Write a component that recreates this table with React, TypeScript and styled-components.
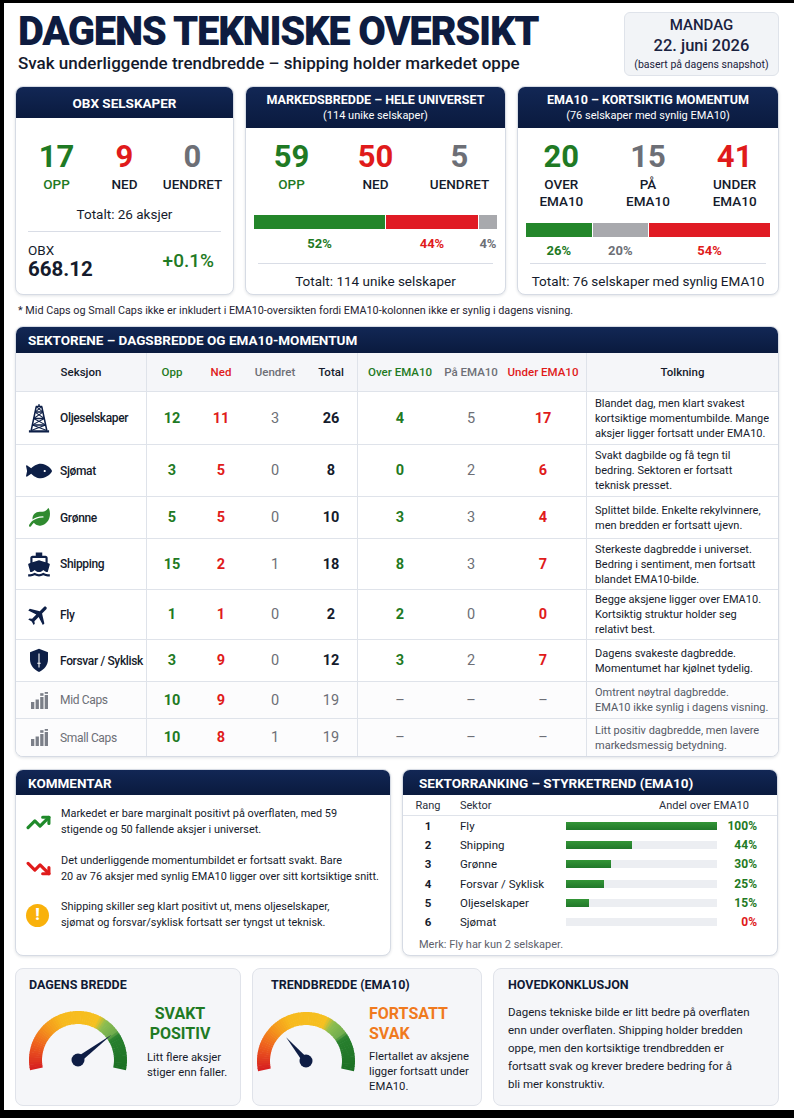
import React from 'react';
import styled, { createGlobalStyle } from 'styled-components';
import { FaFish, FaLeaf } from 'react-icons/fa';
import { MdDirectionsBoat, MdFlight } from 'react-icons/md';
import { TrendingUp, TrendingDown } from 'lucide-react';

const NAVY = '#0d1f47';
const INK = '#151b2c';
const GREEN = '#1f7a24';
const RED = '#e01b1b';
const GREY = '#6d6f76';
const LINE = '#dfe3ea';
const HEAD_BG = 'linear-gradient(180deg, #122755 0%, #0a1a3e 100%)';

const GlobalStyle = createGlobalStyle`
	html, body {
		margin: 0;
		padding: 0;
		background: #000;
	}
	body {
		font-family: Roboto, 'Liberation Sans', Arial, sans-serif;
		color: ${INK};
	}
	* {
		box-sizing: border-box;
	}
`;

const Sheet = styled.main`
	width: 790px;
	height: 1107px;
	margin: 3px 0 0 4px;
	padding: 0 15px 0 11px;
	background: #fff;
`;

/* ---------- header ---------- */

const Header = styled.header`
	height: 83px;
	display: flex;
	justify-content: space-between;
	align-items: flex-start;
`;

const TitleBlock = styled.div`
	padding: 7px 0 0 3px;
`;

const Title = styled.h1`
	margin: 0;
	font-size: 40px;
	line-height: 44px;
	font-weight: 900;
	letter-spacing: -1.25px;
	color: #0e1c40;
`;

const Subtitle = styled.p`
	margin: -1px 0 0;
	font-size: 17px;
	line-height: 20px;
	font-weight: 500;
	color: #141a2c;
`;

const DateBox = styled.div`
	margin-top: 9px;
	width: 155px;
	height: 64px;
	background: #f2f4f7;
	border: 1px solid #dfe3ea;
	border-radius: 6px;
	display: flex;
	flex-direction: column;
	align-items: center;
	justify-content: center;
	color: #1a2240;
`;

const DateDay = styled.div`
	font-size: 15px;
	line-height: 19px;
	font-weight: 500;
`;

const DateFull = styled.div`
	font-size: 16.5px;
	line-height: 21px;
	font-weight: 500;
`;

const DateNote = styled.div`
	margin-top: 1px;
	font-size: 10.5px;
	line-height: 15px;
`;

/* ---------- top cards ---------- */

const TopRow = styled.section`
	display: grid;
	grid-template-columns: 219px 261px 262px;
	gap: 11px;
	height: 209px;
`;

const Card = styled.div`
	background: #fff;
	border: 1px solid #d6dbe4;
	border-radius: 8px;
	overflow: hidden;
	box-shadow: 0 1px 3px rgba(20, 30, 60, 0.12);
	display: flex;
	flex-direction: column;
`;

const CardHead = styled.div<{ $h: number; $size?: number }>`
	height: ${p => p.$h}px;
	flex-shrink: 0;
	background: ${HEAD_BG};
	color: #fff;
	display: flex;
	flex-direction: column;
	justify-content: center;
	align-items: center;
	font-size: ${p => p.$size ?? 12.5}px;
	line-height: 16px;
	font-weight: 700;
`;

const HeadSub = styled.span`
	font-size: 11px;
	line-height: 15px;
	font-weight: 400;
`;

const CardBody = styled.div<{ $pt: number }>`
	flex: 1;
	padding-top: ${p => p.$pt}px;
	display: flex;
	flex-direction: column;
`;

const StatRow = styled.div<{ $px: number }>`
	display: grid;
	grid-template-columns: repeat(3, 1fr);
	padding: 0 ${p => p.$px}px;
`;

const Stat = styled.div`
	display: flex;
	flex-direction: column;
	align-items: center;
	text-align: center;
`;

const StatNum = styled.div<{ $c: string }>`
	font-size: 31px;
	line-height: 32px;
	font-weight: 700;
	color: ${p => p.$c};
`;

const StatLabel = styled.div<{ $c: string }>`
	margin-top: 3px;
	font-size: 13.5px;
	line-height: 16.5px;
	font-weight: 500;
	color: ${p => p.$c};
`;

const TotalLine = styled.div<{ $mt: number }>`
	margin-top: ${p => p.$mt}px;
	text-align: center;
	font-size: 13.5px;
	line-height: 18px;
	color: ${INK};
`;

const Divider = styled.div<{ $mt: number; $mx: number }>`
	height: 1px;
	margin: ${p => p.$mt}px ${p => p.$mx}px 0;
	background: #d9dde6;
`;

const ObxRow = styled.div`
	margin-top: 10px;
	padding: 0 19px 0 12px;
	display: flex;
	justify-content: space-between;
	align-items: center;
`;

const ObxLabel = styled.div`
	font-size: 13.5px;
	line-height: 16px;
`;

const ObxValue = styled.div`
	font-size: 20.5px;
	line-height: 22px;
	font-weight: 700;
`;

const ObxChange = styled.div`
	font-size: 19px;
	line-height: 22px;
	font-weight: 500;
	color: ${GREEN};
`;

const Bar = styled.div<{ $mt: number }>`
	margin: ${p => p.$mt}px 8px 0;
	height: 14px;
	display: flex;
	gap: 1px;
`;

const Seg = styled.div<{ $c: string; $w: number }>`
	flex: ${p => p.$w} 0 0;
	background: ${p => p.$c};
`;

const PctRow = styled.div<{ $mt: number }>`
	margin: ${p => p.$mt}px 8px 0;
	display: flex;
	gap: 1px;
`;

const Pct = styled.div<{ $c: string; $w: number }>`
	flex: ${p => p.$w} 0 0;
	min-width: 0;
	white-space: nowrap;
	text-align: center;
	font-size: 13px;
	line-height: 14px;
	font-weight: 700;
	color: ${p => p.$c};
`;

const Footnote = styled.p`
	margin: 0;
	height: 31px;
	padding-left: 3px;
	display: flex;
	align-items: center;
	font-size: 10.8px;
	color: #1f2433;
`;

/* ---------- sector table ---------- */

const SectionHead = styled.div<{ $pl: number; $h?: number }>`
	height: ${p => p.$h ?? 26}px;
	flex-shrink: 0;
	background: ${HEAD_BG};
	color: #fff;
	display: flex;
	align-items: center;
	padding-left: ${p => p.$pl}px;
	font-size: 13.5px;
	font-weight: 700;
`;

const TRow = styled.div<{ $h: number; $head?: boolean; $muted?: boolean }>`
	display: grid;
	grid-template-columns: 131px 50px 48px 60px 53px 84px 58px 87px 1fr;
	height: ${p => p.$h}px;
	border-bottom: 1px solid ${LINE};
	background: ${p => (p.$head ? '#f5f6f9' : p.$muted ? '#fcfcfd' : '#fff')};
	&:last-child {
		border-bottom: none;
	}
`;

const TCell = styled.div<{ $c?: string; $bold?: boolean; $div?: boolean; $size?: number }>`
	display: flex;
	align-items: center;
	justify-content: center;
	font-size: ${p => p.$size ?? 14.5}px;
	font-weight: ${p => (p.$bold ? 700 : 400)};
	color: ${p => p.$c ?? INK};
	border-right: ${p => (p.$div ? `1px solid ${LINE}` : 'none')};
`;

const HeadCell = styled(TCell)`
	font-size: 11.5px;
	font-weight: 500;
`;

const NameCell = styled.div<{ $muted?: boolean }>`
	display: flex;
	align-items: center;
	gap: 8px;
	padding-left: 10px;
	border-right: 1px solid ${LINE};
	font-size: 12px;
	letter-spacing: -0.35px;
	font-weight: ${p => (p.$muted ? 400 : 500)};
	color: ${p => (p.$muted ? GREY : INK)};
	white-space: nowrap;
	overflow: hidden;
`;

const IconBox = styled.span`
	width: 26px;
	display: flex;
	justify-content: center;
	align-items: center;
	flex-shrink: 0;
`;

const NoteCell = styled.div<{ $muted?: boolean }>`
	display: flex;
	align-items: center;
	padding: 0 4px 0 8px;
	font-size: 11px;
	line-height: 15px;
	color: ${p => (p.$muted ? '#555a66' : INK)};
`;

/* ---------- lower row ---------- */

const LowerRow = styled.section`
	margin-top: 12px;
	display: grid;
	grid-template-columns: 376px 376px;
	gap: 11px;
	height: 187px;
`;

const CommentList = styled.ul`
	margin: 0;
	padding: 11px 10px 0 10px;
	list-style: none;
	display: flex;
	flex-direction: column;
	gap: 14.5px;
`;

const CommentItem = styled.li`
	display: grid;
	grid-template-columns: 35px 1fr;
	align-items: center;
	font-size: 10.9px;
	line-height: 16px;
	color: ${INK};
	white-space: nowrap;
`;

const WarnDot = styled.span`
	width: 23px;
	height: 23px;
	border-radius: 50%;
	background: #f9b10b;
	color: #fff;
	font-weight: 900;
	font-size: 16px;
	display: flex;
	align-items: center;
	justify-content: center;
`;

const RankGrid = styled.div<{ $head?: boolean }>`
	display: grid;
	grid-template-columns: 28px 124px 151px 40px;
	align-items: center;
	padding-left: 11px;
	height: ${p => (p.$head ? 21 : 19.2)}px;
	border-bottom: ${p => (p.$head ? `1px solid ${LINE}` : 'none')};
	margin-bottom: ${p => (p.$head ? 0.5 : 0)}px;
	font-size: ${p => (p.$head ? 11 : 11.5)}px;
	color: ${p => (p.$head ? '#2a2f3d' : INK)};
`;

const RankNum = styled.span<{ $plain?: boolean }>`
	text-align: center;
	font-weight: ${p => (p.$plain ? 400 : 700)};
`;

const RankName = styled.span`
	padding-left: 18px;
	white-space: nowrap;
`;

const RankHeadRight = styled.span`
	grid-column: 3 / 5;
	text-align: right;
	padding-right: 8px;
`;

const Track = styled.div`
	height: 8px;
	background: #eceef2;
`;

const Fill = styled.div`
	height: 100%;
	background: linear-gradient(180deg, #339537, #21782a);
`;

const RankPct = styled.span<{ $c: string }>`
	text-align: right;
	font-weight: 700;
	font-size: 12px;
	color: ${p => p.$c};
`;

const RankNote = styled.div`
	margin-top: 5px;
	padding-left: 16px;
	font-size: 11px;
	line-height: 15px;
	color: #5d616b;
`;

/* ---------- bottom row ---------- */

const BottomRow = styled.section`
	margin-top: 12px;
	display: grid;
	grid-template-columns: 226px 230px 1fr;
	gap: 11px;
	height: 138px;
`;

const SoftCard = styled.div`
	background: #f5f6f9;
	border: 1px solid #e0e3ea;
	border-radius: 8px;
	padding-top: 8px;
`;

const SoftTitle = styled.h3<{ $pl: number }>`
	margin: 0;
	padding-left: ${p => p.$pl}px;
	font-size: 12.5px;
	line-height: 16px;
	font-weight: 700;
	color: #111a35;
`;

const GaugeRow = styled.div<{ $pl: number; $gap: number; $mt: number }>`
	margin-top: ${p => p.$mt}px;
	padding-left: ${p => p.$pl}px;
	display: flex;
	align-items: flex-start;
	gap: ${p => p.$gap}px;
`;

const GaugeText = styled.div<{ $mt: number }>`
	margin-top: ${p => p.$mt}px;
	display: flex;
	flex-direction: column;
`;

const Verdict = styled.div<{ $c: string; $center?: boolean }>`
	width: 66px;
	text-align: ${p => (p.$center ? 'center' : 'left')};
	font-size: 16px;
	line-height: 20px;
	font-weight: 700;
	color: ${p => p.$c};
	white-space: nowrap;
`;

const GaugeDesc = styled.div<{ $mt: number }>`
	margin-top: ${p => p.$mt}px;
	font-size: 11.3px;
	line-height: 15px;
	color: ${INK};
	white-space: nowrap;
`;

const Conclusion = styled.p`
	margin: 10px 0 0;
	padding-left: 14px;
	font-size: 11.5px;
	line-height: 18px;
	color: ${INK};
	white-space: nowrap;
`;

/* ---------- drawings ---------- */

const Derrick = () => (
	<svg width="22" height="31" viewBox="0 0 24 32" fill="none" stroke={NAVY} strokeWidth="1.7" strokeLinejoin="round">
		<path d="M12 0.5V3M8.5 3H15.5" />
		<path d="M9 3L3.5 29M15 3L20.5 29" />
		<path d="M7.7 9H16.3M6.2 16H17.8M4.8 23H19.2" />
		<path d="M9 3L16.3 9M15 3L7.7 9M7.7 9L17.8 16M16.3 9L6.2 16M6.2 16L19.2 23M17.8 16L4.8 23M4.8 23L20.5 29M19.2 23L3.5 29" strokeWidth="1.1" />
		<path d="M1 30H23" strokeWidth="2.6" />
	</svg>
);

const Shield = () => (
	<svg width="20" height="25" viewBox="0 0 20 25">
		<path d="M10 0.8L19 4.2V11.5C19 17.3 15.2 21.6 10 24C4.8 21.6 1 17.3 1 11.5V4.2Z" fill={NAVY} />
		<path d="M10 5.5V19.5M8.3 15.2H11.7" stroke="#fff" strokeWidth="1.1" />
	</svg>
);

const MiniBars = () => (
	<svg width="17" height="17" viewBox="0 0 17 17" fill="#7b7f88">
		<rect x="0" y="10" width="3.3" height="7" />
		<rect x="4.6" y="7.5" width="3.3" height="9.5" />
		<rect x="9.2" y="5" width="3.3" height="12" />
		<rect x="9.2" y="1.2" width="3.3" height="2.6" />
		<rect x="13.7" y="3" width="3.3" height="14" />
		<rect x="13.7" y="0" width="3.3" height="1.8" />
	</svg>
);

type IconKind = 'oil' | 'fish' | 'leaf' | 'ship' | 'plane' | 'shield' | 'bars';

const SectorIcon = ({ kind }: { kind: IconKind }) => {
	switch (kind) {
		case 'oil':
			return <Derrick />;
		case 'fish':
			return <FaFish size={26} color={NAVY} />;
		case 'leaf':
			return <FaLeaf size={21} color="#2f8a2f" />;
		case 'ship':
			return <MdDirectionsBoat size={27} color={NAVY} />;
		case 'plane':
			return <MdFlight size={28} color={NAVY} style={{ transform: 'rotate(45deg)' }} />;
		case 'shield':
			return <Shield />;
		default:
			return <MiniBars />;
	}
};

type Rgb = [number, number, number];

const gaugeStops: [number, Rgb][] = [
	[192, [214, 30, 32]],
	[160, [238, 96, 30]],
	[135, [244, 150, 28]],
	[112, [247, 186, 30]],
	[64, [246, 192, 32]],
	[54, [140, 190, 80]],
	[37, [112, 172, 78]],
	[31, [40, 128, 46]],
	[-12, [28, 112, 36]],
];

const colorAt = (a: number) => {
	for (let i = 0; i < gaugeStops.length - 1; i++) {
		const [a1, c1] = gaugeStops[i];
		const [a2, c2] = gaugeStops[i + 1];
		if (a <= a1 && a >= a2) {
			const t = (a1 - a) / (a1 - a2);
			const c = c1.map((v, k) => Math.round(v + (c2[k] - v) * t));
			return `rgb(${c[0]},${c[1]},${c[2]})`;
		}
	}
	return 'rgb(28,112,36)';
};

const Gauge = ({ angle, len }: { angle: number; len: number }) => {
	const cx = 52;
	const cy = 52;
	const r = 42.5;
	const pt = (deg: number, rad: number) => {
		const t = (deg * Math.PI) / 180;
		return [cx + rad * Math.cos(t), cy - rad * Math.sin(t)];
	};
	const segs = [];
	for (let a = 192; a > -12; a -= 3) {
		const b = Math.max(a - 3.8, -12);
		const [x1, y1] = pt(a, r);
		const [x2, y2] = pt(b, r);
		segs.push(
			<path
				key={a}
				d={`M${x1} ${y1}A${r} ${r} 0 0 1 ${x2} ${y2}`}
				stroke={colorAt(a - 1.5)}
				strokeWidth="13"
				fill="none"
			/>
		);
	}
	const [tx, ty] = pt(angle, len);
	const [lx, ly] = pt(angle + 90, 3.2);
	const [rx, ry] = pt(angle - 90, 3.2);
	return (
		<svg width="104" height="66" viewBox="0 0 104 66">
			{segs}
			<polygon points={`${lx},${ly} ${tx},${ty} ${rx},${ry}`} fill="#0e1d45" />
			<circle cx={cx} cy={cy} r="6.5" fill="#0e1d45" />
		</svg>
	);
};

/* ---------- data ---------- */

type Sector = {
	icon: IconKind;
	name: string;
	opp: number;
	ned: number;
	u: number;
	total: number;
	over: string;
	paa: string;
	under: string;
	note: string[];
	h: number;
	muted?: boolean;
};

const sectors: Sector[] = [
	{ icon: 'oil', name: 'Oljeselskaper', opp: 12, ned: 11, u: 3, total: 26, over: '4', paa: '5', under: '17', h: 53,
		note: ['Blandet dag, men klart svakest', 'kortsiktige momentumbilde. Mange', 'aksjer ligger fortsatt under EMA10.'] },
	{ icon: 'fish', name: 'Sjømat', opp: 3, ned: 5, u: 0, total: 8, over: '0', paa: '2', under: '6', h: 52,
		note: ['Svakt dagbilde og få tegn til', 'bedring. Sektoren er fortsatt', 'teknisk presset.'] },
	{ icon: 'leaf', name: 'Grønne', opp: 5, ned: 5, u: 0, total: 10, over: '3', paa: '3', under: '4', h: 42,
		note: ['Splittet bilde. Enkelte rekylvinnere,', 'men bredden er fortsatt ujevn.'] },
	{ icon: 'ship', name: 'Shipping', opp: 15, ned: 2, u: 1, total: 18, over: '8', paa: '3', under: '7', h: 51,
		note: ['Sterkeste dagbredde i universet.', 'Bedring i sentiment, men fortsatt', 'blandet EMA10-bilde.'] },
	{ icon: 'plane', name: 'Fly', opp: 1, ned: 1, u: 0, total: 2, over: '2', paa: '0', under: '0', h: 50,
		note: ['Begge aksjene ligger over EMA10.', 'Kortsiktig struktur holder seg', 'relativt best.'] },
	{ icon: 'shield', name: 'Forsvar / Syklisk', opp: 3, ned: 9, u: 0, total: 12, over: '3', paa: '2', under: '7', h: 42,
		note: ['Dagens svakeste dagbredde.', 'Momentumet har kjølnet tydelig.'] },
	{ icon: 'bars', name: 'Mid Caps', opp: 10, ned: 9, u: 0, total: 19, over: '–', paa: '–', under: '–', h: 37, muted: true,
		note: ['Omtrent nøytral dagbredde.', 'EMA10 ikke synlig i dagens visning.'] },
	{ icon: 'bars', name: 'Small Caps', opp: 10, ned: 8, u: 1, total: 19, over: '–', paa: '–', under: '–', h: 37, muted: true,
		note: ['Litt positiv dagbredde, men lavere', 'markedsmessig betydning.'] },
];

const ranking = [
	{ rank: 1, name: 'Fly', pct: 100 },
	{ rank: 2, name: 'Shipping', pct: 44 },
	{ rank: 3, name: 'Grønne', pct: 30 },
	{ rank: 4, name: 'Forsvar / Syklisk', pct: 25 },
	{ rank: 5, name: 'Oljeselskaper', pct: 15 },
	{ rank: 6, name: 'Sjømat', pct: 0 },
];

const Lines = ({ lines }: { lines: string[] }) => (
	<span>
		{lines.map((l, i) => (
			<React.Fragment key={i}>
				{i > 0 && <br />}
				{l}
			</React.Fragment>
		))}
	</span>
);

const App = () => {
	return (
		<>
			<GlobalStyle />
			<Sheet>
				<Header>
					<TitleBlock>
						<Title>DAGENS TEKNISKE OVERSIKT</Title>
						<Subtitle>Svak underliggende trendbredde – shipping holder markedet oppe</Subtitle>
					</TitleBlock>
					<DateBox>
						<DateDay>MANDAG</DateDay>
						<DateFull>22. juni 2026</DateFull>
						<DateNote>(basert på dagens snapshot)</DateNote>
					</DateBox>
				</Header>

				<TopRow>
					<Card>
						<CardHead $h={31} $size={13.5}>OBX SELSKAPER</CardHead>
						<CardBody $pt={23}>
							<StatRow $px={6.5}>
								<Stat><StatNum $c={GREEN}>17</StatNum><StatLabel $c={GREEN}>OPP</StatLabel></Stat>
								<Stat><StatNum $c={RED}>9</StatNum><StatLabel $c={INK}>NED</StatLabel></Stat>
								<Stat><StatNum $c={GREY}>0</StatNum><StatLabel $c={INK}>UENDRET</StatLabel></Stat>
							</StatRow>
							<TotalLine $mt={12}>Totalt: 26 aksjer</TotalLine>
							<Divider $mt={8} $mx={12} />
							<ObxRow>
								<div>
									<ObxLabel>OBX</ObxLabel>
									<ObxValue>668.12</ObxValue>
								</div>
								<ObxChange>+0.1%</ObxChange>
							</ObxRow>
						</CardBody>
					</Card>

					<Card>
						<CardHead $h={41}>
							MARKEDSBREDDE – HELE UNIVERSET
							<HeadSub>(114 unike selskaper)</HeadSub>
						</CardHead>
						<CardBody $pt={13}>
							<StatRow $px={3.5}>
								<Stat><StatNum $c={GREEN}>59</StatNum><StatLabel $c={GREEN}>OPP</StatLabel></Stat>
								<Stat><StatNum $c={RED}>50</StatNum><StatLabel $c={INK}>NED</StatLabel></Stat>
								<Stat><StatNum $c={GREY}>5</StatNum><StatLabel $c={INK}>UENDRET</StatLabel></Stat>
							</StatRow>
							<Bar $mt={22.5}>
								<Seg $c="#23862a" $w={130} />
								<Seg $c="#e01b24" $w={91} />
								<Seg $c="#a8a9ad" $w={18} />
							</Bar>
							<PctRow $mt={8}>
								<Pct $c={GREEN} $w={130}>52%</Pct>
								<Pct $c={RED} $w={91}>44%</Pct>
								<Pct $c={GREY} $w={18}>4%</Pct>
							</PctRow>
							<Divider $mt={12} $mx={12} />
							<TotalLine $mt={8}>Totalt: 114 unike selskaper</TotalLine>
						</CardBody>
					</Card>

					<Card>
						<CardHead $h={41}>
							EMA10 – KORTSIKTIG MOMENTUM
							<HeadSub>(76 selskaper med synlig EMA10)</HeadSub>
						</CardHead>
						<CardBody $pt={13}>
							<StatRow $px={0}>
								<Stat><StatNum $c={GREEN}>20</StatNum><StatLabel $c={INK}>OVER<br />EMA10</StatLabel></Stat>
								<Stat><StatNum $c={GREY}>15</StatNum><StatLabel $c={INK}>PÅ<br />EMA10</StatLabel></Stat>
								<Stat><StatNum $c={RED}>41</StatNum><StatLabel $c={INK}>UNDER<br />EMA10</StatLabel></Stat>
							</StatRow>
							<Bar $mt={14}>
								<Seg $c="#23862a" $w={65} />
								<Seg $c="#a8a9ad" $w={55} />
								<Seg $c="#e01b24" $w={120} />
							</Bar>
							<PctRow $mt={6.5}>
								<Pct $c={GREEN} $w={65}>26%</Pct>
								<Pct $c={GREY} $w={55}>20%</Pct>
								<Pct $c={RED} $w={120}>54%</Pct>
							</PctRow>
							<Divider $mt={5.5} $mx={12} />
							<TotalLine $mt={8}>Totalt: 76 selskaper med synlig EMA10</TotalLine>
						</CardBody>
					</Card>
				</TopRow>

				<Footnote>
					* Mid Caps og Small Caps ikke er inkludert i EMA10-oversikten fordi EMA10-kolonnen ikke er synlig i dagens visning.
				</Footnote>

				<Card>
					<SectionHead $pl={12}>SEKTORENE – DAGSBREDDE OG EMA10-MOMENTUM</SectionHead>
					<TRow $h={39} $head>
						<HeadCell $div>Seksjon</HeadCell>
						<HeadCell $c={GREEN}>Opp</HeadCell>
						<HeadCell $c={RED}>Ned</HeadCell>
						<HeadCell $c={GREY}>Uendret</HeadCell>
						<HeadCell $div>Total</HeadCell>
						<HeadCell $c={GREEN}>Over EMA10</HeadCell>
						<HeadCell $c={GREY}>På EMA10</HeadCell>
						<HeadCell $c={RED} $div>Under EMA10</HeadCell>
						<HeadCell>Tolkning</HeadCell>
					</TRow>
					{sectors.map(s => (
						<TRow key={s.name} $h={s.h} $muted={s.muted}>
							<NameCell $muted={s.muted}>
								<IconBox><SectorIcon kind={s.icon} /></IconBox>
								{s.name}
							</NameCell>
							<TCell $c={GREEN} $bold>{s.opp}</TCell>
							<TCell $c={RED} $bold>{s.ned}</TCell>
							<TCell $c={GREY}>{s.u}</TCell>
							<TCell $c={s.muted ? GREY : INK} $bold={!s.muted} $div>{s.total}</TCell>
							<TCell $c={s.muted ? GREY : GREEN} $bold={!s.muted}>{s.over}</TCell>
							<TCell $c={GREY}>{s.paa}</TCell>
							<TCell $c={s.muted ? GREY : RED} $bold={!s.muted} $div>{s.under}</TCell>
							<NoteCell $muted={s.muted}><Lines lines={s.note} /></NoteCell>
						</TRow>
					))}
				</Card>

				<LowerRow>
					<Card>
						<SectionHead $pl={12} $h={25}>KOMMENTAR</SectionHead>
						<CommentList>
							<CommentItem>
								<TrendingUp size={25} color="#1f8a2a" strokeWidth={3} />
								<Lines lines={['Markedet er bare marginalt positivt på overflaten, med 59', 'stigende og 50 fallende aksjer i universet.']} />
							</CommentItem>
							<CommentItem>
								<TrendingDown size={25} color={RED} strokeWidth={3} />
								<Lines lines={['Det underliggende momentumbildet er fortsatt svakt. Bare', '20 av 76 aksjer med synlig EMA10 ligger over sitt kortsiktige snitt.']} />
							</CommentItem>
							<CommentItem>
								<WarnDot>!</WarnDot>
								<Lines lines={['Shipping skiller seg klart positivt ut, mens oljeselskaper,', 'sjømat og forsvar/syklisk fortsatt ser tyngst ut teknisk.']} />
							</CommentItem>
						</CommentList>
					</Card>

					<Card>
						<SectionHead $pl={16} $h={25}>SEKTORRANKING – STYRKETREND (EMA10)</SectionHead>
						<RankGrid $head>
							<RankNum $plain>Rang</RankNum>
							<RankName>Sektor</RankName>
							<RankHeadRight>Andel over EMA10</RankHeadRight>
						</RankGrid>
						{ranking.map(r => (
							<RankGrid key={r.rank}>
								<RankNum>{r.rank}</RankNum>
								<RankName>{r.name}</RankName>
								<Track>
									<Fill style={{ width: `${r.pct}%` }} />
								</Track>
								<RankPct $c={r.pct > 0 ? GREEN : RED}>{r.pct}%</RankPct>
							</RankGrid>
						))}
						<RankNote>Merk: Fly har kun 2 selskaper.</RankNote>
					</Card>
				</LowerRow>

				<BottomRow>
					<SoftCard>
						<SoftTitle $pl={13}>DAGENS BREDDE</SoftTitle>
						<GaugeRow $pl={10} $gap={17} $mt={15}>
							<Gauge angle={37} len={42} />
							<GaugeText $mt={-4}>
								<Verdict $c={GREEN} $center>SVAKT<br />POSITIV</Verdict>
								<GaugeDesc $mt={6}>Litt flere aksjer<br />stiger enn faller.</GaugeDesc>
							</GaugeText>
						</GaugeRow>
					</SoftCard>

					<SoftCard>
						<SoftTitle $pl={18}>TRENDBREDDE (EMA10)</SoftTitle>
						<GaugeRow $pl={1} $gap={11} $mt={16}>
							<Gauge angle={130} len={31} />
							<GaugeText $mt={-5}>
								<Verdict $c="#f07a1e">FORTSATT<br />SVAK</Verdict>
								<GaugeDesc $mt={4.5}>Flertallet av aksjene<br />ligger fortsatt under<br />EMA10.</GaugeDesc>
							</GaugeText>
						</GaugeRow>
					</SoftCard>

					<SoftCard>
						<SoftTitle $pl={14}>HOVEDKONKLUSJON</SoftTitle>
						<Conclusion>
							<Lines lines={[
								'Dagens tekniske bilde er litt bedre på overflaten',
								'enn under overflaten. Shipping holder bredden',
								'oppe, men den kortsiktige trendbredden er',
								'fortsatt svak og krever bredere bedring for å',
								'bli mer konstruktiv.',
							]} />
						</Conclusion>
					</SoftCard>
				</BottomRow>
			</Sheet>
		</>
	);
};

export default App;
